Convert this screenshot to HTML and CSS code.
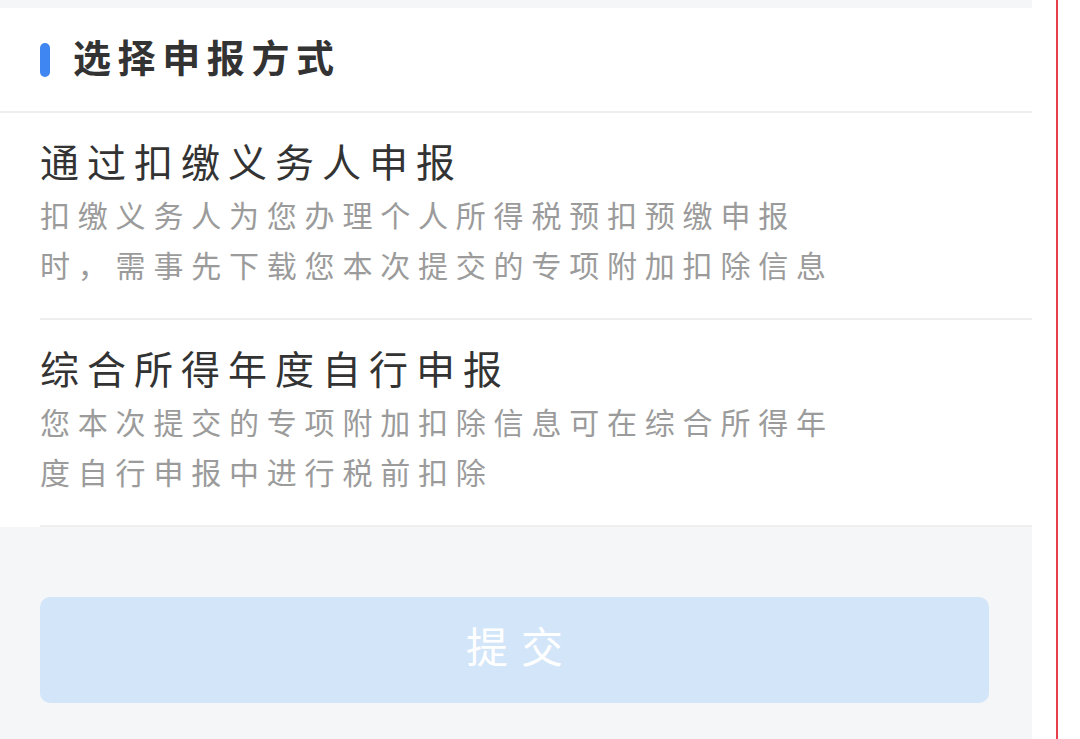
FILE: index.html
```html
<!DOCTYPE html>
<html lang="zh-CN">
<head>
    <meta charset="UTF-8">
    <title>选择申报方式</title>
    <link rel="stylesheet" href="styles.css">
</head>
<body>

    <div class="screen">
        <div class="panel">
            <div class="panel-head">
                <span class="head-mark"></span>
                <h2 class="head-title">选择申报方式</h2>
            </div>

            <div class="option">
                <div class="option-title">通过扣缴义务人申报</div>
                <div class="option-desc">扣缴义务人为您办理个人所得税预扣预缴申报时，需事先下载您本次提交的专项附加扣除信息</div>
            </div>

            <div class="option">
                <div class="option-title">综合所得年度自行申报</div>
                <div class="option-desc">您本次提交的专项附加扣除信息可在综合所得年度自行申报中进行税前扣除</div>
            </div>
        </div>

        <div class="actions">
            <button class="submit-btn" disabled>提交</button>
        </div>
    </div>

    <div class="edge-line"></div>

</body>
</html>
```

FILE: styles.css
```css
body {
    margin: 0;
    background-color: #fff;
    font-family: "Noto Sans CJK SC", "Noto Sans", sans-serif;
    display: flex;
    height: 739px;
    overflow: hidden;
}

.screen {
    width: 1032px;
    background-color: #f5f6f8;
    padding-top: 8px;
}

.panel {
    background-color: #fff;
}

.panel-head {
    height: 103px;
    display: flex;
    align-items: center;
    padding-left: 40px;
    border-bottom: 2px solid #eeeeee;
}

.head-mark {
    width: 10px;
    height: 34px;
    border-radius: 5px;
    background-color: #3f86f2;
    margin-right: 23px;
}

.head-title {
    margin: 0 0 8px 0;
    font-size: 38px;
    font-weight: bold;
    letter-spacing: 6.6px;
    color: #333;
    line-height: 50px;
}

.option {
    margin-left: 40px;
    padding: 22px 0 29px 0;
    border-bottom: 2px solid #eeeeee;
}

.option-title {
    font-size: 39px;
    letter-spacing: 8px;
    line-height: 50px;
    color: #333;
}

.option-desc {
    margin-top: 4px;
    max-width: 812px;
    font-size: 30px;
    letter-spacing: 7.8px;
    line-height: 50px;
    color: #9b9b9b;
}

.actions {
    padding: 70px 43px 0 40px;
}

.submit-btn {
    display: block;
    width: 100%;
    height: 106px;
    border: none;
    border-radius: 10px;
    background-color: #d3e5f8;
    color: #fff;
    font-family: inherit;
    font-size: 42px;
    letter-spacing: 13px;
    padding: 0 0 12px 13px;
}

.edge-line {
    width: 2px;
    height: 739px;
    margin-left: 24px;
    background-color: #e8404a;
}
```
